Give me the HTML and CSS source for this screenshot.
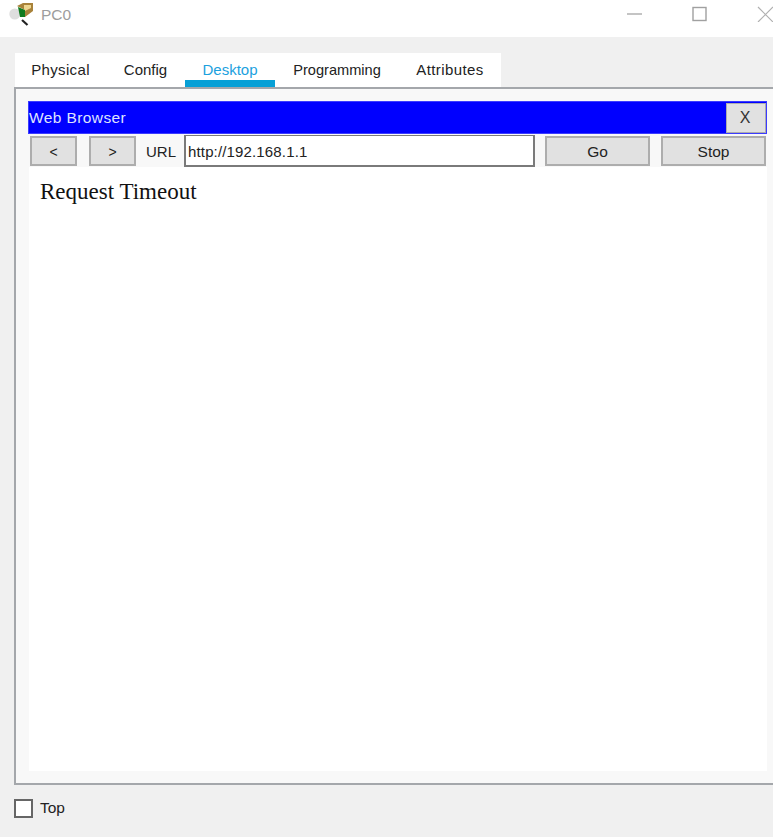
FILE: index.html
```html
<!DOCTYPE html>
<html lang="en">
<head>
<meta charset="utf-8">
<title>PC0</title>
<link rel="stylesheet" href="styles.css">
</head>
<body>
<div class="window">
  <header class="titlebar">
    <div class="title">
      <svg class="app-icon" width="26" height="28" viewBox="0 0 26 28">
        <circle cx="6.8" cy="13" r="5.5" fill="#dedede"/>
        <path d="M14 19l5.500 5" stroke="#222" stroke-width="2.2"/>
        <path d="M9 5l6-3h10v8l-8 6v-7z" fill="#a8823a"/>
        <path d="M16 4h7v3l-6 3-1-1z" fill="#edd58f"/>
        <path d="M10 6l7 3v7h-5z" fill="#0f7a1e"/>
      </svg>
      <span class="title-text">PC0</span>
    </div>
    <div class="controls">
      <svg class="ctl ctl-min" width="16" height="16" viewBox="0 0 16 16"><path d="M0 8h15" stroke="#a5a5a5" stroke-width="1.3"/></svg>
      <svg class="ctl ctl-max" width="16" height="16" viewBox="0 0 16 16"><rect x="1" y="1.500" width="13" height="13" fill="none" stroke="#a0a0a0" stroke-width="1.4"/></svg>
      <svg class="ctl ctl-close" width="16" height="16" viewBox="0 0 16 16"><path d="M1 1l15 15M16 1L1 16" stroke="#b0b0b0" stroke-width="1.2"/></svg>
    </div>
  </header>
  <main class="content">
    <nav class="tabs">
      <div class="tab tab-physical">Physical</div>
      <div class="tab tab-config">Config</div>
      <div class="tab tab-desktop">Desktop</div>
      <div class="tab tab-programming">Programming</div>
      <div class="tab tab-attributes">Attributes</div>
    </nav>
    <section class="panel">
      <div class="app-head">
        <span class="app-name">Web Browser</span>
        <button class="btn btn-x">X</button>
      </div>
      <div class="toolbar">
        <button class="btn btn-nav">&lt;</button>
        <button class="btn btn-nav">&gt;</button>
        <span class="url-label">URL</span>
        <div class="url-input">http://192.168.1.1</div>
        <button class="btn btn-go">Go</button>
        <button class="btn btn-stop">Stop</button>
      </div>
      <div class="page">Request Timeout</div>
    </section>
    <footer class="footer">
      <span class="check"></span>
      <span class="check-label">Top</span>
    </footer>
  </main>
</div>
</body>
</html>
```
FILE: styles.css
```css
* { box-sizing: border-box; }
html, body { margin: 0; padding: 0; }
body { font-family: "Liberation Sans", Arial, sans-serif; color: #222; }
.window { width: 773px; height: 837px; display: flex; flex-direction: column; background: #f0f0f0; overflow: hidden; }

.titlebar { height: 37px; background: #fff; display: flex; justify-content: space-between; align-items: flex-start; flex: none; }
.title { display: flex; align-items: center; padding: 1px 0 0 8px; }
.app-icon { flex: none; }
.title-text { font-size: 15.5px; color: #9d9d9d; margin-left: 7px; }
.controls { display: flex; padding-top: 6px; }
.ctl { flex: none; }
.ctl-min { margin-right: 49px; }
.ctl-max { margin-right: 49px; }

.content { flex: 1; display: flex; flex-direction: column; padding: 16px 0 0 14px; min-height: 0; }
.tabs { display: flex; height: 34px; margin-left: 1px; flex: none; width: 486px; background: #fff; }
.tab { font-size: 15px; line-height: 34px; text-align: center; color: #222; }
.tab-physical { width: 91px; letter-spacing: .35px; }
.tab-config { width: 79px; }
.tab-desktop { width: 90px; color: #1ba1de; border-bottom: 7px solid #07a0d6; height: 34px; }
.tab-programming { width: 124px; font-size: 14.6px; }
.tab-attributes { width: 102px; letter-spacing: .4px; }

.panel { flex: none; height: 698px; background: #f8f8f8; border: solid #a4a7ab; border-width: 2px 0 2px 2px; padding: 12px 6px 12px 12px; display: flex; flex-direction: column; }
.app-head { height: 33px; background: #0000ff; border: 1px solid #3b3bff; display: flex; align-items: center; justify-content: space-between; flex: none; }
.app-name { color: #dfe3ff; font-size: 15.5px; letter-spacing: .4px; }
.btn { font-family: inherit; font-size: 15.5px; color: #222; background: #e1e1e1; border: 2px solid #adadad; padding: 2px 0 0; margin: 0; }
.btn-x { width: 40px; height: 30px; font-size: 16px; border-width: 1px; color: #333; padding: 1px 2px 0 0; }

.toolbar { height: 32px; margin-top: 1px; display: flex; align-items: center; flex: none; padding-left: 2px; }
.btn-nav { width: 47px; height: 30px; margin-right: 12px; font-size: 14px; }
.btn-nav + .btn-nav { margin-right: 10px; }
.url-label { font-size: 15px; width: 38px; padding-top: 1px; }
.url-input { width: 351px; height: 32px; background: #fff; border: 1px solid #7a7a7a; border-width: 1px 2px 2px 2px; font-size: 15px; letter-spacing: .15px; line-height: 32px; padding-left: 2px; }
.btn-go { width: 105px; height: 30px; margin-left: 10px; }
.btn-stop { width: 105px; height: 30px; margin-left: 11px; }

.page { flex: 1; background: #fff; font-family: "Liberation Serif", "Times New Roman", serif; font-size: 23px; color: #111; padding: 12px 0 0 11px; margin-left: 1px; }

.footer { flex: 1; display: flex; align-items: center; padding: 0 0 6px 0; }
.check { width: 19px; height: 19px; background: #fff; border: 2px solid #666; flex: none; }
.check-label { font-size: 15.5px; margin-left: 7px; color: #222; }
```
